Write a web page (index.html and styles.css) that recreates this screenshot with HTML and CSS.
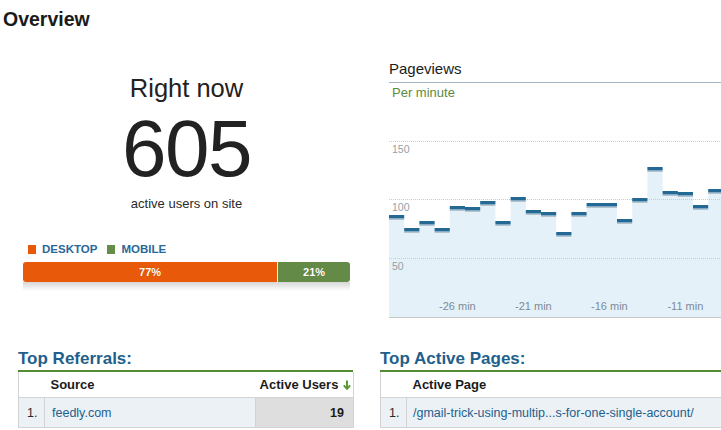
FILE: index.html
```html
<!DOCTYPE html>
<html>
<head>
<meta charset="utf-8">
<link rel="stylesheet" href="styles.css">
</head>
<body>
<div class="page">
  <h1 class="title">Overview</h1>
  <div class="top">
    <section class="now">
      <div class="now-label">Right now</div>
      <div class="now-count">605</div>
      <div class="now-sub">active users on site</div>
      <div class="legend">
        <span class="key"><i class="sw sw-desktop"></i>DESKTOP</span>
        <span class="key"><i class="sw sw-mobile"></i>MOBILE</span>
      </div>
      <div class="split">
        <div class="seg seg-desktop" style="width:77.7%">77%</div>
        <div class="seg seg-mobile">21%</div>
      </div>
      <div class="reflect"></div>
    </section>
    <section class="pv">
      <div class="pv-title">Pageviews</div>
      <div class="pv-sub">Per minute</div>
      <svg class="chart" width="332" height="220" viewBox="0 0 332 220">
        <path class="area" d="M0,216 V114 H15.2 V127 H30.4 V120 H45.6 V127 H60.8 V105 H76 V106 H91.2 V100 H106.4 V120 H121.6 V96 H136.8 V109 H152 V111 H167.2 V131 H182.4 V111 H197.6 V102 H228 V118 H243.2 V97 H258.4 V66 H273.6 V90 H288.8 V91 H304 V104 H319.2 V88 H334.4 V216 Z"/>
        <line class="grid" x1="0" y1="40.5" x2="332" y2="40.5"/>
        <line class="grid" x1="0" y1="98.5" x2="332" y2="98.5"/>
        <line class="grid" x1="0" y1="157.5" x2="332" y2="157.5"/>
        <line class="axis" x1="0" y1="216.5" x2="332" y2="216.5"/>
        <text class="ylab" x="3" y="52">150</text>
        <text class="ylab" x="3" y="110">100</text>
        <text class="ylab" x="3" y="169">50</text>
        <path class="bar-shadow" d="M0 118.5H15.2 M15.2 131.5H30.4 M30.4 124.5H45.6 M45.6 131.5H60.8 M60.8 109.5H76 M76 110.5H91.2 M91.2 104.5H106.4 M106.4 124.5H121.6 M121.6 100.5H136.8 M136.8 113.5H152 M152 115.5H167.2 M167.2 135.5H182.4 M182.4 115.5H197.6 M197.6 106.5H228 M228 122.5H243.2 M243.2 101.5H258.4 M258.4 70.5H273.6 M273.6 94.5H288.8 M288.8 95.5H304 M304 108.5H319.2 M319.2 92.5H334.4"/>
        <path class="bars" d="M0 115.75H15.2 M15.2 128.75H30.4 M30.4 121.75H45.6 M45.6 128.75H60.8 M60.8 106.75H76 M76 107.75H91.2 M91.2 101.75H106.4 M106.4 121.75H121.6 M121.6 97.75H136.8 M136.8 110.75H152 M152 112.75H167.2 M167.2 132.75H182.4 M182.4 112.75H197.6 M197.6 103.75H228 M228 119.75H243.2 M243.2 98.75H258.4 M258.4 67.75H273.6 M273.6 91.75H288.8 M288.8 92.75H304 M304 105.75H319.2 M319.2 89.75H334.4"/>
        <text class="xlab" x="68.4" y="209">-26 min</text>
        <text class="xlab" x="144.4" y="209">-21 min</text>
        <text class="xlab" x="220.4" y="209">-16 min</text>
        <text class="xlab" x="296.4" y="209">-11 min</text>
      </svg>
    </section>
  </div>
  <div class="bottom">
    <section class="panel panel-ref">
      <h2 class="panel-title">Top Referrals:</h2>
      <table class="grid-table">
        <colgroup><col class="c-idx"><col class="c-src"><col class="c-users"></colgroup>
        <thead>
          <tr><th></th><th class="th-left">Source</th><th class="th-right">Active Users <svg class="sort" width="8" height="10" viewBox="0 0 8 10"><path d="M4 0.5V8.5 M0.8 5.3L4 8.8 7.2 5.3"/></svg></th></tr>
        </thead>
        <tbody>
          <tr><td class="idx">1.</td><td class="link">feedly.com</td><td class="num">19</td></tr>
        </tbody>
      </table>
    </section>
    <section class="panel panel-pages">
      <h2 class="panel-title">Top Active Pages:</h2>
      <table class="grid-table wide">
        <colgroup><col class="c-idx"><col></colgroup>
        <thead>
          <tr><th></th><th class="th-left">Active Page</th></tr>
        </thead>
        <tbody>
          <tr><td class="idx">1.</td><td class="link">/gmail-trick-using-multip...s-for-one-single-account/</td></tr>
        </tbody>
      </table>
    </section>
  </div>
</div>
</body>
</html>
```

FILE: styles.css
```css
html, body {
  margin: 0;
  padding: 0;
  background: #fff;
  overflow: hidden;
}
body {
  font-family: "Liberation Sans", Arial, sans-serif;
  color: #222;
  width: 721px;
  height: 430px;
}
.page {
  width: 721px;
}
.title {
  margin: 9px 0 0 3px;
  font-size: 19.5px;
  line-height: 20px;
  font-weight: bold;
  color: #1a1a1a;
}
.top {
  display: flex;
  align-items: flex-start;
  height: 292px;
}
.now {
  margin-left: 23px;
  width: 327px;
  display: flex;
  flex-direction: column;
}
.now-label {
  margin-top: 44px;
  font-size: 25.5px;
  line-height: 30px;
  text-align: center;
  color: #222;
}
.now-count {
  margin-top: 6px;
  font-size: 80px;
  line-height: 80px;
  text-align: center;
  color: #222;
  letter-spacing: -1.5px;
}
.now-sub {
  margin-top: 7px;
  font-size: 13px;
  line-height: 16px;
  text-align: center;
  color: #2a2a2a;
}
.legend {
  margin-top: 30px;
  padding-left: 5px;
  display: flex;
  gap: 10px;
  font-size: 11.5px;
  line-height: 14px;
  font-weight: bold;
  color: #2a6798;
}
.key {
  display: flex;
  align-items: center;
  gap: 6px;
}
.sw {
  display: block;
  width: 8px;
  height: 9px;
}
.sw-desktop { background: #e8580a; }
.sw-mobile { background: #658c48; }
.split {
  margin-top: 6px;
  height: 20px;
  display: flex;
  border-radius: 3px;
  overflow: hidden;
}
.seg {
  height: 20px;
  line-height: 20px;
  font-size: 11px;
  font-weight: bold;
  color: #fff;
  text-align: center;
  text-shadow: 0 0 1px rgba(0,0,0,0.25);
}
.seg-desktop { background: #e8590a; }
.seg-mobile {
  flex: 1;
  background: #648a48;
  border-left: 1px solid #f4f4f4;
}
.reflect {
  height: 9px;
  background: linear-gradient(#d6d6d6, rgba(255,255,255,0));
}
.pv {
  margin-left: 39px;
  width: 332px;
  display: flex;
  flex-direction: column;
}
.pv-title {
  margin-top: 31px;
  font-size: 15px;
  line-height: 18px;
  padding-bottom: 4px;
  border-bottom: 1px solid #a7b6c3;
  color: #1b1b1b;
}
.pv-sub {
  margin-top: 2px;
  padding-left: 3px;
  font-size: 13px;
  line-height: 16px;
  color: #5e8a3d;
}
.chart {
  display: block;
  overflow: hidden;
}
.area { fill: #e5f1f9; }
.grid {
  stroke: #c6cccf;
  stroke-width: 1;
  stroke-dasharray: 1 1;
}
.axis {
  stroke: #c9c9c9;
  stroke-width: 1;
}
.ylab {
  font-family: "Liberation Sans", Arial, sans-serif;
  font-size: 10.5px;
  fill: #959fa8;
}
.xlab {
  font-family: "Liberation Sans", Arial, sans-serif;
  font-size: 11px;
  fill: #7d8a95;
  text-anchor: middle;
}
.bars {
  stroke: #246894;
  stroke-width: 3.5;
  fill: none;
}
.bar-shadow {
  stroke: #b3c2cc;
  stroke-width: 1.2;
  fill: none;
}
.bottom {
  display: flex;
  align-items: flex-start;
  padding-top: 28px;
}
.panel-ref {
  margin-left: 18px;
  width: 335px;
}
.panel-pages {
  margin-left: 27px;
  width: 370px;
  flex: none;
}
.panel-title {
  margin: 0;
  font-size: 17px;
  line-height: 20px;
  padding-bottom: 1px;
  font-weight: bold;
  color: #1f5f8c;
  border-bottom: 2px solid #548c33;
}
.grid-table {
  width: 335px;
  border-collapse: collapse;
  table-layout: fixed;
  border-left: 1px solid #d3d3d3;
  border-right: 1px solid #d3d3d3;
  font-size: 12.5px;
}
.grid-table.wide { width: 370px; }
.c-idx { width: 26px; }
.c-src { width: 211px; }
.c-users { width: 98px; }
.grid-table th {
  height: 25px;
  padding: 0;
  font-size: 13px;
  font-weight: bold;
  color: #1b1b1b;
  border-bottom: 1px solid #d3d3d3;
  vertical-align: middle;
}
.th-left {
  text-align: left;
  padding-left: 6px !important;
}
.th-right {
  text-align: right;
  padding-right: 2px !important;
  white-space: nowrap;
}
.sort {
  display: inline-block;
  vertical-align: -1px;
  margin-left: 1px;
}
.sort path {
  stroke: #5a9a30;
  stroke-width: 2;
  fill: none;
}
.grid-table td {
  height: 29px;
  padding: 0;
  border-bottom: 1px solid #d3d3d3;
  border-right: 1px solid #d3d3d3;
  background: #ebf1f5;
  vertical-align: middle;
  white-space: nowrap;
  overflow: hidden;
}
.grid-table td.idx {
  padding-left: 8px;
  color: #2a2a2a;
}
.grid-table td.link {
  padding-left: 7px;
  color: #1e5f8e;
}
.grid-table.wide td.link {
  padding-left: 6px;
}
.grid-table td.num {
  text-align: right;
  padding-right: 9px;
  font-weight: bold;
  color: #1b1b1b;
  background: #dedede;
}
```
